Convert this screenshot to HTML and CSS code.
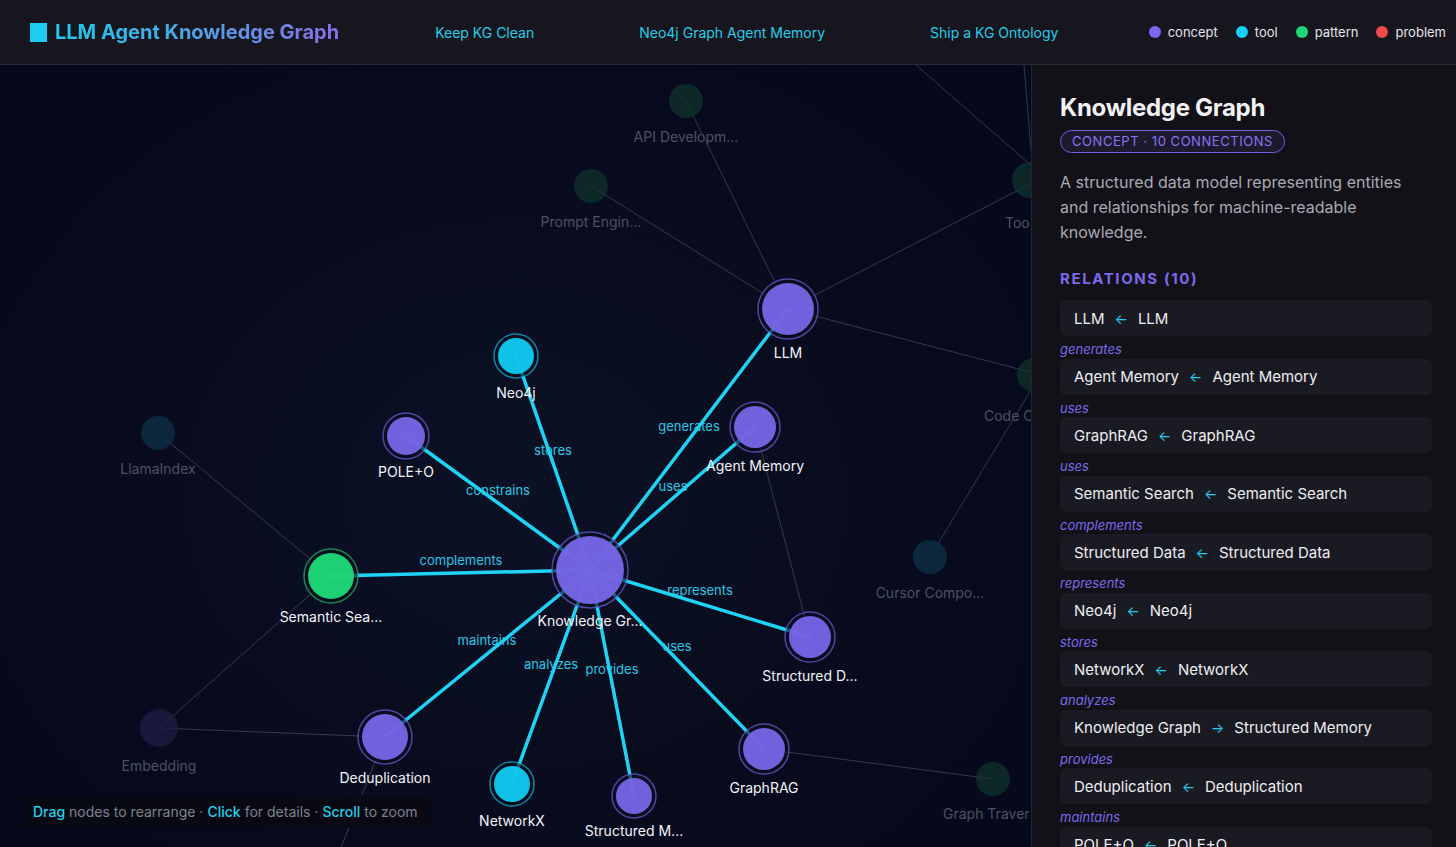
FILE: index.html
```html
<!DOCTYPE html>
<html lang="en">
<head>
    <meta charset="UTF-8">
    <meta name="viewport" content="width=device-width, initial-scale=1.0">
    <title>LLM Agent Knowledge Graph</title>
    <link rel="stylesheet" href="styles.css">
</head>
<body>
    <header class="topbar">
        <div class="brand">
            <span class="brand-mark"></span>
            <span class="brand-title">LLM Agent Knowledge Graph</span>
        </div>
        <nav class="links">
            <a href="#">Keep KG Clean</a>
            <a href="#">Neo4j Graph Agent Memory</a>
            <a href="#">Ship a KG Ontology</a>
        </nav>
        <ul class="legend">
            <li><span class="dot concept"></span>concept</li>
            <li><span class="dot tool"></span>tool</li>
            <li><span class="dot pattern"></span>pattern</li>
            <li><span class="dot problem"></span>problem</li>
        </ul>
    </header>

    <main class="layout">
        <section class="graph">
            <svg class="graph-svg" width="1031" height="782" viewBox="0 65 1031 782">
                <!-- faded edges -->
                <g class="edge-dim">
                    <line x1="788" y1="309" x2="686" y2="101"/>
                    <line x1="788" y1="309" x2="591" y2="186"/>
                    <line x1="788" y1="309" x2="1034" y2="182"/>
                    <line x1="788" y1="309" x2="1034" y2="373"/>
                    <line x1="916" y1="65" x2="1034" y2="168"/>
                    <line x1="1024" y1="65" x2="1031" y2="150"/>
                    <line x1="158" y1="433" x2="331" y2="576"/>
                    <line x1="331" y1="576" x2="159" y2="728"/>
                    <line x1="159" y1="728" x2="385" y2="737"/>
                    <line x1="385" y1="737" x2="336" y2="860"/>
                    <line x1="755" y1="427" x2="810" y2="637"/>
                    <line x1="764" y1="749" x2="993" y2="779"/>
                    <line x1="930" y1="557" x2="1034" y2="385"/>
                </g>

                <!-- faded nodes -->
                <g class="node-dim">
                    <circle class="dim-pattern" cx="686" cy="101" r="17"/>
                    <circle class="dim-pattern" cx="591" cy="186" r="17"/>
                    <circle class="dim-pattern" cx="1030" cy="180" r="18"/>
                    <circle class="dim-pattern" cx="1034" cy="375" r="17"/>
                    <circle class="dim-tool" cx="158" cy="433" r="17"/>
                    <circle class="dim-concept" cx="159" cy="728" r="19"/>
                    <circle class="dim-tool" cx="930" cy="557" r="17"/>
                    <circle class="dim-pattern" cx="993" cy="779" r="17"/>
                    <text x="686" y="142">API Developm...</text>
                    <text x="591" y="227">Prompt Engin...</text>
                    <text x="1005" y="228" class="start">Too</text>
                    <text x="984" y="421" class="start">Code C</text>
                    <text x="158" y="474">LlamaIndex</text>
                    <text x="159" y="771">Embedding</text>
                    <text x="930" y="598">Cursor Compo...</text>
                    <text x="943" y="819" class="start">Graph Traver</text>
                </g>

                <!-- active edges -->
                <g class="edge-hot">
                    <line x1="590" y1="570" x2="788" y2="309"/>
                    <line x1="590" y1="570" x2="516" y2="356"/>
                    <line x1="590" y1="570" x2="406" y2="436"/>
                    <line x1="590" y1="570" x2="755" y2="427"/>
                    <line x1="590" y1="570" x2="331" y2="576"/>
                    <line x1="590" y1="570" x2="810" y2="637"/>
                    <line x1="590" y1="570" x2="764" y2="749"/>
                    <line x1="590" y1="570" x2="385" y2="737"/>
                    <line x1="590" y1="570" x2="512" y2="784"/>
                    <line x1="590" y1="570" x2="634" y2="796"/>
                </g>
                <g class="edge-label">
                    <text x="689" y="431">generates</text>
                    <text x="553" y="455">stores</text>
                    <text x="498" y="495">constrains</text>
                    <text x="673" y="491">uses</text>
                    <text x="461" y="565">complements</text>
                    <text x="700" y="595">represents</text>
                    <text x="487" y="645">maintains</text>
                    <text x="551" y="669">analyzes</text>
                    <text x="612" y="674">provides</text>
                    <text x="677" y="651">uses</text>
                </g>

                <!-- active nodes -->
                <g class="node">
                    <circle class="ring concept" cx="590" cy="570" r="38"/>
                    <circle class="fill concept" cx="590" cy="570" r="34"/>
                    <circle class="ring concept" cx="788" cy="309" r="30"/>
                    <circle class="fill concept" cx="788" cy="309" r="26"/>
                    <circle class="ring tool" cx="516" cy="356" r="22"/>
                    <circle class="fill tool" cx="516" cy="356" r="18"/>
                    <circle class="ring concept" cx="406" cy="436" r="23"/>
                    <circle class="fill concept" cx="406" cy="436" r="19"/>
                    <circle class="ring concept" cx="755" cy="427" r="25"/>
                    <circle class="fill concept" cx="755" cy="427" r="21"/>
                    <circle class="ring pattern" cx="331" cy="576" r="27"/>
                    <circle class="fill pattern" cx="331" cy="576" r="23"/>
                    <circle class="ring concept" cx="810" cy="637" r="25"/>
                    <circle class="fill concept" cx="810" cy="637" r="21"/>
                    <circle class="ring concept" cx="764" cy="749" r="25"/>
                    <circle class="fill concept" cx="764" cy="749" r="21"/>
                    <circle class="ring concept" cx="385" cy="737" r="27"/>
                    <circle class="fill concept" cx="385" cy="737" r="23"/>
                    <circle class="ring tool" cx="512" cy="784" r="22"/>
                    <circle class="fill tool" cx="512" cy="784" r="18"/>
                    <circle class="ring concept" cx="634" cy="796" r="22"/>
                    <circle class="fill concept" cx="634" cy="796" r="18"/>
                </g>
                <g class="node-label">
                    <text x="590" y="626">Knowledge Gr...</text>
                    <text x="788" y="358">LLM</text>
                    <text x="516" y="398">Neo4j</text>
                    <text x="406" y="477">POLE+O</text>
                    <text x="755" y="471">Agent Memory</text>
                    <text x="331" y="622">Semantic Sea...</text>
                    <text x="810" y="681">Structured D...</text>
                    <text x="764" y="793">GraphRAG</text>
                    <text x="385" y="783">Deduplication</text>
                    <text x="512" y="826">NetworkX</text>
                    <text x="634" y="836">Structured M...</text>
                </g>
            </svg>

            <div class="hint"><b>Drag</b> nodes to rearrange · <b>Click</b> for details · <b>Scroll</b> to zoom</div>
        </section>

        <aside class="panel">
            <h2 class="panel-title">Knowledge Graph</h2>
            <span class="badge">Concept · 10 connections</span>
            <p class="desc">A structured data model representing entities and relationships for machine-readable knowledge.</p>

            <h3 class="section">Relations (10)</h3>
            <div class="relations">
                <div class="rel"><span>LLM</span><span class="arrow">←</span><span>LLM</span></div>
                <div class="rel-type">generates</div>
                <div class="rel"><span>Agent Memory</span><span class="arrow">←</span><span>Agent Memory</span></div>
                <div class="rel-type">uses</div>
                <div class="rel"><span>GraphRAG</span><span class="arrow">←</span><span>GraphRAG</span></div>
                <div class="rel-type">uses</div>
                <div class="rel"><span>Semantic Search</span><span class="arrow">←</span><span>Semantic Search</span></div>
                <div class="rel-type">complements</div>
                <div class="rel"><span>Structured Data</span><span class="arrow">←</span><span>Structured Data</span></div>
                <div class="rel-type">represents</div>
                <div class="rel"><span>Neo4j</span><span class="arrow">←</span><span>Neo4j</span></div>
                <div class="rel-type">stores</div>
                <div class="rel"><span>NetworkX</span><span class="arrow">←</span><span>NetworkX</span></div>
                <div class="rel-type">analyzes</div>
                <div class="rel"><span>Knowledge Graph</span><span class="arrow">→</span><span>Structured Memory</span></div>
                <div class="rel-type">provides</div>
                <div class="rel"><span>Deduplication</span><span class="arrow">←</span><span>Deduplication</span></div>
                <div class="rel-type">maintains</div>
                <div class="rel"><span>POLE+O</span><span class="arrow">←</span><span>POLE+O</span></div>
            </div>
        </aside>
    </main>
</body>
</html>
```

FILE: styles.css
```css
* {
    box-sizing: border-box;
}

body {
    margin: 0;
    height: 100vh;
    overflow: hidden;
    font-family: Inter, "Noto Sans", sans-serif;
    background-color: #070a1a;
    color: #e8e8ee;
    display: flex;
    flex-direction: column;
}

/* header */
.topbar {
    height: 65px;
    flex: 0 0 65px;
    display: flex;
    align-items: center;
    padding: 0 10px 0 30px;
    background-color: #17161f;
    border-bottom: 1px solid #2a2935;
}

.brand {
    display: flex;
    align-items: center;
    gap: 8px;
}

.brand-mark {
    width: 17px;
    height: 19px;
    background-color: #1ccdf0;
}

.brand-title {
    font-size: 20px;
    font-weight: 700;
    background: linear-gradient(90deg, #1fc9ee 0%, #4aa8e6 45%, #8b6ee8 100%);
    -webkit-background-clip: text;
    background-clip: text;
    color: transparent;
}

.links {
    display: flex;
    gap: 105px;
    margin-left: 96px;
}

.links a {
    color: #26cdea;
    text-decoration: none;
    font-size: 14px;
}

.legend {
    list-style: none;
    margin: 0 0 0 auto;
    padding: 0;
    display: flex;
    gap: 18px;
    font-size: 13px;
    color: #e4e4ea;
}

.legend li {
    display: flex;
    align-items: center;
    gap: 7px;
}

.dot {
    width: 12px;
    height: 12px;
    border-radius: 50%;
}

.dot.concept { background-color: #7b68ee; }
.dot.tool { background-color: #12cff5; }
.dot.pattern { background-color: #1fd778; }
.dot.problem { background-color: #ef4b4b; }

/* main area */
.layout {
    flex: 1;
    display: flex;
    min-height: 0;
}

.graph {
    position: relative;
    flex: 0 0 1031px;
    overflow: hidden;
    background: radial-gradient(ellipse at 50% 55%, #0c1126 0%, #080b1d 55%, #05071a 100%);
}

.graph-svg {
    display: block;
    font-family: Inter, "Noto Sans", sans-serif;
}

.edge-dim line {
    stroke: #5a6078;
    stroke-opacity: 0.55;
    stroke-width: 1;
}

.node-dim text {
    fill: #4c5263;
    font-size: 14px;
    text-anchor: middle;
}

.node-dim text.start {
    text-anchor: start;
}

.dim-pattern { fill: #10342c; fill-opacity: 0.7; }
.dim-tool { fill: #0e2d45; fill-opacity: 0.8; }
.dim-concept { fill: #1c1c42; fill-opacity: 0.8; }

.edge-hot line {
    stroke: #1ed3f3;
    stroke-width: 3.5;
    stroke-linecap: round;
}

.edge-label text {
    fill: #2ac8e4;
    font-size: 13px;
    text-anchor: middle;
}

.node .fill {
    fill-opacity: 0.93;
}

.node .ring {
    fill: #0a0d1e;
    fill-opacity: 0.6;
    stroke-width: 1.5;
    stroke-opacity: 0.7;
}

.fill.concept { fill: #7a68ec; }
.fill.tool { fill: #0fd0f6; }
.fill.pattern { fill: #1fe07a; }
.ring.concept { stroke: #6b5fd6; }
.ring.tool { stroke: #12b8da; }
.ring.pattern { stroke: #1fb86a; }

.node-label text {
    fill: #f4f4f8;
    font-size: 14px;
    text-anchor: middle;
}

.hint {
    position: absolute;
    left: 20px;
    bottom: 19px;
    height: 33px;
    padding: 0 13px;
    display: flex;
    align-items: center;
    gap: 4px;
    border-radius: 8px;
    background-color: rgba(8, 9, 18, 0.85);
    font-size: 14px;
    color: #80818e;
    white-space: nowrap;
}

.hint b {
    font-weight: 500;
    color: #26cdea;
}

/* side panel */
.panel {
    flex: 1;
    overflow: hidden;
    padding: 28px 24px 0 28px;
    background-color: #111117;
    border-left: 1px solid #24242e;
}

.panel-title {
    margin: 0 0 7px;
    font-size: 24px;
    font-weight: 700;
    letter-spacing: -0.3px;
    line-height: 30px;
    color: #f2f2f4;
}

.badge {
    display: inline-block;
    padding: 2px 11px;
    border: 1px solid #6f5fe0;
    border-radius: 12px;
    background-color: rgba(123, 104, 238, 0.1);
    color: #8675f2;
    font-size: 13px;
    line-height: 17px;
    letter-spacing: 0.55px;
    text-transform: uppercase;
}

.desc {
    margin: 17px 0 24px;
    font-size: 16px;
    line-height: 25px;
    color: #a9a9b4;
}

.section {
    margin: 0 0 12px;
    font-size: 15px;
    font-weight: 700;
    letter-spacing: 1.6px;
    text-transform: uppercase;
    color: #7b6aee;
}

.relations {
    display: flex;
    flex-direction: column;
}

.rel {
    height: 36px;
    display: flex;
    align-items: center;
    gap: 10px;
    padding: 0 14px;
    border-radius: 6px;
    background-color: #1a1a22;
    font-size: 15px;
    color: #eeeef2;
    white-space: nowrap;
}

.arrow {
    color: #26cdea;
    font-size: 14px;
}

.rel-type {
    margin-top: 5px;
    height: 17.5px;
    line-height: 17px;
    font-size: 13px;
    font-style: italic;
    color: #7b6aee;
}
```
